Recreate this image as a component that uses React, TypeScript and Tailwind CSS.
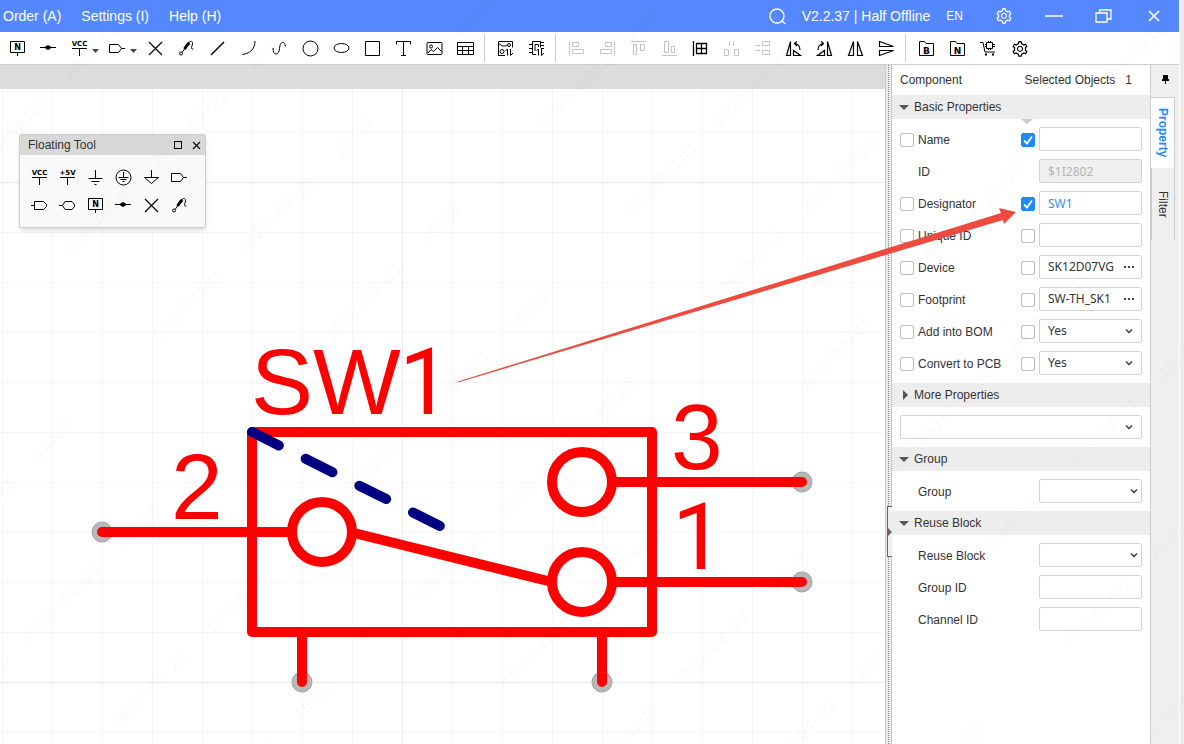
import { useState } from 'react';
import type { ReactNode } from 'react';
import { AiOutlineSetting } from 'react-icons/ai';

type IconName = keyof typeof icons;

// All toolbar glyphs are drawn on a 17px grid, centre at 8.5
const icons = {
  netLabel: (
    <>
      <path d="M1.5 1.5h14v11h-14zM8.5 12.5V16" />
      <text x="8.5" y="10" textAnchor="middle" fontSize="8" fontWeight="700" fill="currentColor" stroke="none">N</text>
    </>
  ),
  junction: (
    <>
      <path d="M0 7.5h16" />
      <path d="M8 5.5l3.5 2-3.5 2-3.5-2z" fill="currentColor" />
    </>
  ),
  vcc: (
    <>
      <path d="M1 8.5h15M8.5 8.5V16" />
      <text x="8.5" y="6" textAnchor="middle" fontSize="7" fontWeight="700" fill="currentColor" stroke="none">VCC</text>
    </>
  ),
  v5: (
    <>
      <path d="M1 8.5h15M8.5 8.5V16" />
      <text x="8.5" y="6" textAnchor="middle" fontSize="7" fontWeight="700" fill="currentColor" stroke="none">+5V</text>
    </>
  ),
  ground: <path d="M8.5 1v8M1.5 9.5h14M4.5 12.5h8M7.5 15.5h2" />,
  earth: (
    <>
      <circle cx="8.5" cy="8.5" r="7.5" />
      <path d="M8.5 3v5M3.5 8.5h10M5.5 10.5h6M7.5 12.5h2" />
    </>
  ),
  signalGround: <path d="M8.5 1v7.5M1.5 8.5h14l-7 6z" />,
  portOut: <path d="M.5 4.5h9l3 4-3 4h-9zM12.5 8.5H16" />,
  portIn: <path d="M0 8.5h3.5M3.5 4.5h9l3 3v2l-3 3h-9z" />,
  portBi: <path d="M0 8.5h3.5M6 4.5h7l2.5 3v2l-2.5 3H6l-2.5-4z" />,
  noConnect: <path d="M2 2l13 13M15 2L2 15" strokeWidth="1.2" />,
  probe: (
    <>
      <circle cx="3" cy="13.5" r="1.5" />
      <path d="M4 12.5l3-4" />
      <path d="M6.5 9L10 4l1.5-1" strokeWidth="3" />
      <path d="M11 2.5c2-2 4-1 3.5 1.5s-2.5 5.5 1 5" />
    </>
  ),
  line: <path d="M2 15L15 2" strokeWidth="1.5" />,
  arc: <path d="M15 1c0 7-3.5 12-12.5 13.5" />,
  curve: <path d="M2 8c0 8 6 8 6.5.5S14 .5 14.5 6.5" />,
  circle: <circle cx="8.5" cy="8.5" r="7.5" />,
  ellipse: <ellipse cx="8.5" cy="8" rx="7.5" ry="4.5" />,
  rect: <path d="M1.5 1.5h14v14h-14z" />,
  text: <path d="M1.5 4.5v-3h14v3M8.5 1.5v14M6 15.5h5" />,
  image: (
    <>
      <rect x="1" y="2.5" width="15" height="12" rx="1" />
      <circle cx="5" cy="6.5" r="1.5" />
      <path d="M2 13l3-3.5 2.5 2 4-4 4 4" />
    </>
  ),
  table: <path d="M.5 2.5h16v12H.5zM.5 6.500h16M.5 10.500h16M5.5 6.500v8M11.500 6.500v8" />,
  swapSymbol: (
    <>
      <path d="M8 15.5H1.5v-14h14v6M1.5 3.5l4 2.500h3l1.500-1" />
      <circle cx="12" cy="5" r="1.5" />
      <circle cx="5" cy="11.5" r="2" />
      <path d="M10.5 15.5V9l-2 2M13.5 9v6.5l2.5-2.5" />
    </>
  ),
  swapFootprint: <path d="M8 14.5H4.5v-13h8v6M1 4.5h3.5M1 8.5h3.5M1 12.5h3.5M12.5 5.5H16M12.5 2.5H16M7 11V4.5h3.5V7M10.5 15.5V9l-2 2M13.5 9v6.5l2.5-2.5M16 8.5h-3" />,
  alignLeft: <path d="M1.5 1v15M4.5 2.5h6v4h-6zM4.5 9.5h11v4h-11z" />,
  alignRight: <path d="M15.5 1v15M6.5 2.5h6v4h-6zM1.5 9.5h11v4h-11z" />,
  alignTop: <path d="M1 1.5h15M3.5 4.5h3v10h-3zM10.5 4.5h4v6h-4z" />,
  alignBottom: <path d="M1 15.5h15M3.5 1.5h4v11h-4zM10.5 6.5h3v6h-3z" />,
  alignGrid: <path d="M1.5 1v15M4.5 3.5h10v10h-10zM9.5 3.5v10M4.5 8.5h10" strokeWidth="1.3" />,
  distributeH: <path d="M1.5 9.5h4v6h-4zM11.5 9.5h4v6h-4zM6.5 1v5M10.5 1v5" />,
  distributeV: <path d="M8.5 1.5h7v4h-7zM8.5 10.5h7v4h-7zM1 5.5h5M1 10.5h5" />,
  rotateLeft: <path d="M1.5 15.5l4-14v14zM8.5 15.5v-5l7 5zM15 10c0-4-2-6-5.5-6.5M12 1.5l-2.5 2L12 6" strokeWidth="1.2" />,
  rotateRight: <path d="M15.5 15.5l-4-14v14zM8.5 15.5v-5l-7 5zM2 10c0-4 2-6 5.5-6.5M5 1.5l2.5 2L5 6" strokeWidth="1.2" />,
  flipH: <path d="M1.5 15.5l5-14v14zM10.5 1.5l5 14h-5z" strokeWidth="1.2" />,
  flipV: <path d="M1.5 1.5l14 5h-14zM1.5 10.5h14l-14 5z" strokeWidth="1.2" />,
  folderB: (
    <>
      <path d="M1.5 15.5v-14h5l1.5 2h7.5v12z" />
      <text x="8.5" y="13.5" textAnchor="middle" fontSize="9" fontWeight="700" fill="currentColor" stroke="none">B</text>
    </>
  ),
  folderN: (
    <>
      <path d="M1.5 15.5v-14h5l1.5 2h7.5v12z" />
      <text x="8.5" y="13.5" textAnchor="middle" fontSize="9" fontWeight="700" fill="currentColor" stroke="none">N</text>
    </>
  ),
  cart: (
    <>
      <path d="M0 2.5h3l2 9.500h10M6.500 2.500h6v6h-6zM5 4.500h1.500M5 6.500h1.500M12.500 4.500H15M12.500 6.500H15M8.500 1v1.500M10.500 1v1.500M8.500 8.500V10M10.500 8.500V10" />
      <path d="M5 14.5h2M12 14.5h2" strokeWidth="2" />
    </>
  ),
};

const Icon = ({ name }: { name: IconName }) => (
  <svg className="size-[17px] shrink-0 font-['DejaVu_Sans',sans-serif]" viewBox="0 0 17 17" fill="none" stroke="currentColor" aria-hidden="true">
    {icons[name]}
  </svg>
);

const ToolButton = ({ label, disabled, children }: { label: string; disabled?: boolean; children: ReactNode }) => (
  <button
    type="button"
    title={label}
    disabled={disabled}
    className="flex h-[31px] w-[31px] shrink-0 items-center justify-center text-black hover:bg-gray-100 disabled:text-[#c4c4c4]"
  >
    {children}
  </button>
);

const DropdownTool = ({ label, icon }: { label: string; icon: IconName }) => (
  <button type="button" title={label} className="flex h-[31px] w-[38px] shrink-0 items-center gap-1 pl-[7px] text-black">
    <Icon name={icon} />
    <svg className="mt-1 h-1 w-[7px] shrink-0" viewBox="0 0 7 4" aria-hidden="true">
      <path d="M0 0h7L3.5 4z" fill="#444" />
    </svg>
  </button>
);

const Separator = () => <span className="mr-[5px] ml-[3px] h-7 w-px shrink-0 self-center bg-[#ccc]" />;

const drawTools: [IconName, string][] = [
  ['noConnect', 'No Connect Flag'],
  ['probe', 'Probe'],
  ['line', 'Line'],
  ['arc', 'Arc'],
  ['curve', 'Bezier'],
  ['circle', 'Circle'],
  ['ellipse', 'Ellipse'],
  ['rect', 'Rectangle'],
  ['text', 'Text'],
  ['image', 'Image'],
  ['table', 'Table'],
];

const layoutTools: [IconName, string, boolean][] = [
  ['alignLeft', 'Align Left', true],
  ['alignRight', 'Align Right', true],
  ['alignTop', 'Align Top', true],
  ['alignBottom', 'Align Bottom', true],
  ['alignGrid', 'Align to Grid', false],
  ['distributeH', 'Distribute Horizontally', true],
  ['distributeV', 'Distribute Vertically', true],
  ['rotateLeft', 'Rotate Left', false],
  ['rotateRight', 'Rotate Right', false],
  ['flipH', 'Flip Horizontal', false],
  ['flipV', 'Flip Vertical', false],
];

const floatingTools: [IconName, string][] = [
  ['vcc', 'VCC'],
  ['v5', '+5V'],
  ['ground', 'Ground'],
  ['earth', 'Protective Earth'],
  ['signalGround', 'Signal Ground'],
  ['portOut', 'Output Port'],
  ['portIn', 'Input Port'],
  ['portBi', 'Bidirectional Port'],
  ['netLabel', 'Net Label'],
  ['junction', 'Junction'],
  ['noConnect', 'No Connect Flag'],
  ['probe', 'Probe'],
];

const MenuBar = () => (
  <header className="flex h-8 shrink-0 items-center bg-[#5588ff] text-sm text-white">
    <nav className="flex flex-1 gap-5 pl-[3px]">
      <button type="button">Order (A)</button>
      <button type="button">Settings (I)</button>
      <button type="button">Help (H)</button>
    </nav>
    <div className="flex items-center">
      <button type="button" title="Search" className="mr-4">
        <svg className="size-[17px]" viewBox="0 0 17 17" fill="none" stroke="currentColor" strokeWidth="1.3">
          <circle cx="8" cy="8" r="7" />
          <path d="M13 13l3.5 3" />
        </svg>
      </button>
      <span>V2.2.37 | Half Offline</span>
      <button type="button" className="ml-4 text-xs">EN</button>
      <button type="button" title="Settings" className="ml-8">
        <AiOutlineSetting className="size-[18px]" />
      </button>
      <button type="button" title="Minimize" className="ml-8">
        <svg className="h-4 w-[18px]" viewBox="0 0 18 16" stroke="currentColor" strokeWidth="1.5">
          <path d="M0 8h18" />
        </svg>
      </button>
      <button type="button" title="Restore" className="ml-8">
        <svg className="h-4 w-[17px]" viewBox="0 0 17 16" fill="none" stroke="currentColor" strokeWidth="1.3">
          <path d="M1 5h11v9H1zM4.5 5V2H16v9h-4" />
        </svg>
      </button>
      <button type="button" title="Close" className="mr-[19px] ml-9">
        <svg className="size-3" viewBox="0 0 12 12" stroke="currentColor" strokeWidth="1.6">
          <path d="M1 1l10 10M11 1L1 11" />
        </svg>
      </button>
    </div>
  </header>
);

const Toolbar = () => (
  <div className="flex h-[33px] shrink-0 items-end overflow-hidden border-b border-[#ccc] bg-white pl-0.5">
    <ToolButton label="Net Label"><Icon name="netLabel" /></ToolButton>
    <ToolButton label="Junction"><Icon name="junction" /></ToolButton>
    <DropdownTool label="Net Flag" icon="vcc" />
    <DropdownTool label="Net Port" icon="portOut" />
    {drawTools.map(([icon, label]) => (
      <ToolButton key={icon} label={label}><Icon name={icon} /></ToolButton>
    ))}
    <Separator />
    <ToolButton label="Replace Symbol"><Icon name="swapSymbol" /></ToolButton>
    <ToolButton label="Replace Footprint"><Icon name="swapFootprint" /></ToolButton>
    <Separator />
    {layoutTools.map(([icon, label, disabled]) => (
      <ToolButton key={icon} label={label} disabled={disabled}><Icon name={icon} /></ToolButton>
    ))}
    <Separator />
    <ToolButton label="BOM"><Icon name="folderB" /></ToolButton>
    <ToolButton label="Netlist"><Icon name="folderN" /></ToolButton>
    <ToolButton label="Order Parts"><Icon name="cart" /></ToolButton>
    <ToolButton label="Preferences"><AiOutlineSetting className="size-[18px]" /></ToolButton>
  </div>
);

// Sheet is offset so that symbol coordinates fall on the 50px grid
const Schematic = () => (
  <svg className="absolute inset-0 size-full" aria-label="SW1 schematic symbol">
    <defs>
      <pattern id="grid" width="50" height="50" patternUnits="userSpaceOnUse" patternTransform="translate(2 -7)">
        <path d="M.5 0v50M0 .5h50" stroke="#f6f6f6" fill="none" />
      </pattern>
      <pattern id="gridMajor" width="500" height="500" patternUnits="userSpaceOnUse" patternTransform="translate(402 93)">
        <path d="M.5 0v500M0 .5h500" stroke="#e9e9e9" fill="none" />
      </pattern>
    </defs>
    <rect width="100%" height="100%" fill="url(#grid)" />
    <rect width="100%" height="100%" fill="url(#gridMajor)" />
    <g transform="translate(2 -7)">
      <g fill="#b8b8b8" stroke="#a0a0a0">
        <circle cx="100" cy="450" r="10" />
        <circle cx="800" cy="400" r="10" />
        <circle cx="800" cy="500" r="10" />
        <circle cx="300" cy="600" r="10" />
        <circle cx="600" cy="600" r="10" />
      </g>
      <g fill="none" stroke="#ff0000" strokeWidth="10" strokeLinecap="round" strokeLinejoin="round">
        <rect x="250" y="350" width="400" height="200" />
        <circle cx="320" cy="450" r="30" />
        <circle cx="580" cy="400" r="30" />
        <circle cx="580" cy="500" r="30" />
        <path d="M100 450h190M610 400h190M610 500h190M300 550v50M600 550v50M352 451l198 49" />
      </g>
      <path d="M250 350l190 95" stroke="#000080" strokeWidth="10" strokeLinecap="round" strokeDasharray="30 30" />
      <g fill="#ff0000" fontSize="93">
        <text x="249" y="332">SW</text>
        <text x="397" y="332" className="font-[Roboto,sans-serif]">1</text>
        <text x="169" y="437">2</text>
        <text x="669" y="387">3</text>
        <text x="670" y="487" className="font-[Roboto,sans-serif]">1</text>
      </g>
    </g>
  </svg>
);

const FloatingTool = () => (
  <section className="absolute top-[45px] left-[19px] w-[187px] rounded-xs border border-[#ccc] bg-[#f9f9f9] shadow-md">
    <div className="flex h-5 items-center bg-[#d8d8d8] pr-1 pl-2">
      <h2 className="flex-1 text-xs text-[#333]">Floating Tool</h2>
      <button type="button" title="Collapse" className="mr-2.5 size-2 border border-black" />
      <button type="button" title="Close">
        <svg className="size-[9px]" viewBox="0 0 9 9" stroke="#111" strokeWidth="1.3">
          <path d="M1 1l7 7M8 1L1 8" />
        </svg>
      </button>
    </div>
    <div className="grid grid-cols-[repeat(6,17px)] gap-[11px] pt-3.5 pb-[13px] pl-[11px]">
      {floatingTools.map(([icon, label]) => (
        <button key={icon} type="button" title={label} className="text-black">
          <Icon name={icon} />
        </button>
      ))}
    </div>
  </section>
);

const Splitter = () => (
  <div className="relative flex w-[7px] shrink-0 border-r border-l border-[#ccc] bg-[#ebebeb] pl-0.5">
    <div className="border-l border-dotted border-[#888]" />
    <button
      type="button"
      title="Collapse panel"
      className="absolute top-[441px] left-px flex h-[51px] w-[5px] items-center border border-r-0 border-[#6b6262] bg-[#eee]"
    >
      <svg className="h-2 w-1" viewBox="0 0 4 8">
        <path d="M0 0l4 4-4 4z" fill="#6b6262" />
      </svg>
    </button>
  </div>
);

const Check = ({ label, checked = false }: { label: string; checked?: boolean }) => {
  const [on, setOn] = useState(checked);
  return (
    <span className="relative mt-0.5 flex size-3.5 shrink-0">
      <input
        type="checkbox"
        aria-label={label}
        checked={on}
        onChange={(e) => setOn(e.target.checked)}
        className="size-3.5 appearance-none rounded-xs border border-[#bbb] bg-white checked:border-[#1e88ff] checked:bg-[#1e88ff]"
      />
      {on && (
        <svg className="pointer-events-none absolute inset-0 size-3.5" viewBox="0 0 14 14" fill="none" stroke="#fff" strokeWidth="1.8">
          <path d="M3 7.5l3 3 5-7" />
        </svg>
      )}
    </span>
  );
};

const Dropdown = ({ id, label, value = '', narrow }: { id: string; label?: string; value?: string; narrow?: boolean }) => (
  <span className="relative flex w-full">
    <select
      id={id}
      aria-label={label}
      defaultValue={value}
      className="h-6 w-full appearance-none rounded-xs border border-[#d4d4d4] bg-white pl-2 font-['Noto_Sans',sans-serif] text-xs text-[#333]"
    >
      <option value={value}>{value}</option>
      {value === 'Yes' && <option value="No">No</option>}
    </select>
    <span className={`pointer-events-none absolute inset-y-0 flex items-center ${narrow ? 'right-1' : 'right-[9px]'}`}>
      <svg className="h-[5px] w-2" viewBox="0 0 8 5" fill="none" stroke="#333" strokeWidth="1.3">
        <path d="M1 .5l3 3 3-3" />
      </svg>
    </span>
  </span>
);

interface Field {
  name: string;
  kind?: 'text' | 'readonly' | 'link' | 'picker' | 'yesno' | 'select';
  value?: string;
  boxes?: boolean;
  checked?: boolean;
}

const basicFields: Field[] = [
  { name: 'Name', boxes: true, checked: true },
  { name: 'ID', kind: 'readonly', value: '$1I2802' },
  { name: 'Designator', kind: 'link', value: 'SW1', boxes: true, checked: true },
  { name: 'Unique ID', boxes: true },
  { name: 'Device', kind: 'picker', value: 'SK12D07VG', boxes: true },
  { name: 'Footprint', kind: 'picker', value: 'SW-TH_SK1', boxes: true },
  { name: 'Add into BOM', kind: 'yesno', value: 'Yes', boxes: true },
  { name: 'Convert to PCB', kind: 'yesno', value: 'Yes', boxes: true },
];

const FieldControl = ({ id, field }: { id: string; field: Field }) => {
  const { kind, value = '' } = field;
  const base = "h-6 w-full min-w-0 rounded-xs border border-[#d4d4d4] px-2 font-['Noto_Sans',sans-serif] text-xs";

  if (kind === 'yesno') return <Dropdown id={id} value={value} />;
  if (kind === 'select') return <Dropdown id={id} narrow />;
  if (kind === 'readonly') return <input id={id} readOnly value={value} className={`${base} bg-[#efefef] text-[#b5b5b5]`} />;
  if (kind === 'link') return <input id={id} defaultValue={value} className={`${base} bg-white text-[#3b8cee]`} />;
  if (kind === 'picker') {
    return (
      <span className="flex h-6 w-full items-center rounded-xs border border-[#d4d4d4] bg-white pl-2">
        <input id={id} defaultValue={value} className="w-[68px] min-w-0 font-['Noto_Sans',sans-serif] text-xs text-[#333]" />
        <button type="button" title={`Choose ${field.name}`} className="flex flex-1 justify-center">
          <svg className="h-0.5 w-2.5" viewBox="0 0 10 2">
            <path d="M0 0h2v2H0zM4 0h2v2H4zM8 0h2v2H8z" fill="#444" />
          </svg>
        </button>
      </span>
    );
  }
  return <input id={id} defaultValue={value} className={`${base} bg-white text-[#333]`} />;
};

const FieldRow = ({ field }: { field: Field }) => {
  const id = field.name.toLowerCase().replace(/ /g, '-');
  return (
    <div className="flex h-6 items-center gap-1">
      {field.boxes ? <Check label={`Show ${field.name}`} /> : <span className="w-3.5" />}
      <label htmlFor={id} className="mt-0.5 flex-1">{field.name}</label>
      {field.boxes && <Check label={`Show value of ${field.name}`} checked={field.checked} />}
      <span className="flex w-[103px]">
        <FieldControl id={id} field={field} />
      </span>
    </div>
  );
};

const SectionHeader = ({ title, open = true }: { title: string; open?: boolean }) => (
  <h3>
    <button type="button" aria-expanded={open} className="flex h-6 w-full items-center gap-[5px] bg-[#ededed] pl-[7px]">
      <svg className="size-2.5" viewBox="0 0 10 10" fill="#555">
        <path d={open ? 'M0 3h10L5 8z' : 'M4 0l5 5-5 5z'} />
      </svg>
      {title}
    </button>
  </h3>
);

const PropertyPanel = () => (
  <aside className="w-[258px] shrink-0 bg-white text-xs text-[#333]">
    <div className="flex h-[30px] items-center px-2">
      <h2 className="flex-1">Component</h2>
      <span>Selected Objects</span>
      <span className="mr-2.5 ml-2.5">1</span>
    </div>
    <SectionHeader title="Basic Properties" />
    <div className="relative flex flex-col gap-2 p-2">
      <svg className="absolute top-0 left-[129px] h-[5px] w-3" viewBox="0 0 12 5">
        <path d="M0 0h12L6 5z" fill="#ccc" />
      </svg>
      {basicFields.map((f) => (
        <FieldRow key={f.name} field={f} />
      ))}
    </div>
    <SectionHeader title="More Properties" open={false} />
    <div className="p-2">
      <Dropdown id="more" label="More Properties" />
    </div>
    <SectionHeader title="Group" />
    <div className="p-2">
      <FieldRow field={{ name: 'Group', kind: 'select' }} />
    </div>
    <SectionHeader title="Reuse Block" />
    <div className="flex flex-col gap-2 p-2">
      <FieldRow field={{ name: 'Reuse Block', kind: 'select' }} />
      <FieldRow field={{ name: 'Group ID' }} />
      <FieldRow field={{ name: 'Channel ID' }} />
    </div>
  </aside>
);

const SideTabs = () => (
  <div className="flex w-[29px] shrink-0 flex-col items-start border-l border-[#ccc] bg-[#efefef] text-xs">
    <button type="button" title="Pin panel" className="flex h-8 w-full items-center justify-center pb-1">
      <svg className="h-[9px] w-[7px]" viewBox="0 0 7 9">
        <path d="M1 0h5v4h1v2H4v3H3V6H0V4h1z" fill="#000" />
      </svg>
    </button>
    <button type="button" className="flex h-[71px] w-6 items-center justify-center border-t border-r border-[#ccc] bg-white font-bold text-[#1e88ff] [writing-mode:vertical-rl]">
      Property
    </button>
    <button type="button" className="flex h-[72px] w-6 items-center justify-center border-y border-r border-[#ccc] text-[#333] [writing-mode:vertical-rl]">
      Filter
    </button>
  </div>
);

const Watermark = () => (
  <svg className="pointer-events-none absolute inset-0 size-full" aria-hidden="true">
    <defs>
      <pattern
        id="watermark"
        width="426"
        height="123"
        patternUnits="userSpaceOnUse"
        patternTransform="translate(158 341) rotate(-45) translate(0 -60)"
      >
        <g fill="#000" fillOpacity=".02" fontSize="17" fontStyle="italic" className="font-['Liberation_Mono',monospace]">
          <text x="0" y="60">chenhaiqi</text>
          <text x="122" y="60">2025-04-21</text>
          <text x="257" y="60">15:26</text>
        </g>
      </pattern>
    </defs>
    <rect width="100%" height="100%" fill="url(#watermark)" />
  </svg>
);

// Arrow from the symbol's designator to its checkbox
const Annotation = () => (
  <svg className="pointer-events-none absolute top-0 left-0 h-[400px] w-[1030px]" aria-hidden="true">
    <path d="M458 381.5L1001 213l-2-5 17 4-12 12-1-4L458 382.5z" fill="#ee4b3e" />
  </svg>
);

const App = () => (
  <div className="relative flex min-h-screen bg-[#f0eaea] font-['Liberation_Sans',Arial,sans-serif]">
    <div className="flex min-w-0 flex-1 flex-col border-r border-white">
      <MenuBar />
      <Toolbar />
      <div className="flex flex-1">
        <main className="flex min-w-0 flex-1 flex-col">
          <div className="h-6 shrink-0 bg-[#dcdcdc]" />
          <div className="relative flex-1 overflow-hidden bg-white">
            <Schematic />
            <FloatingTool />
          </div>
        </main>
        <Splitter />
        <PropertyPanel />
        <SideTabs />
      </div>
    </div>
    <div className="w-1 shrink-0" />
    <Watermark />
    <Annotation />
  </div>
);

export default App;
